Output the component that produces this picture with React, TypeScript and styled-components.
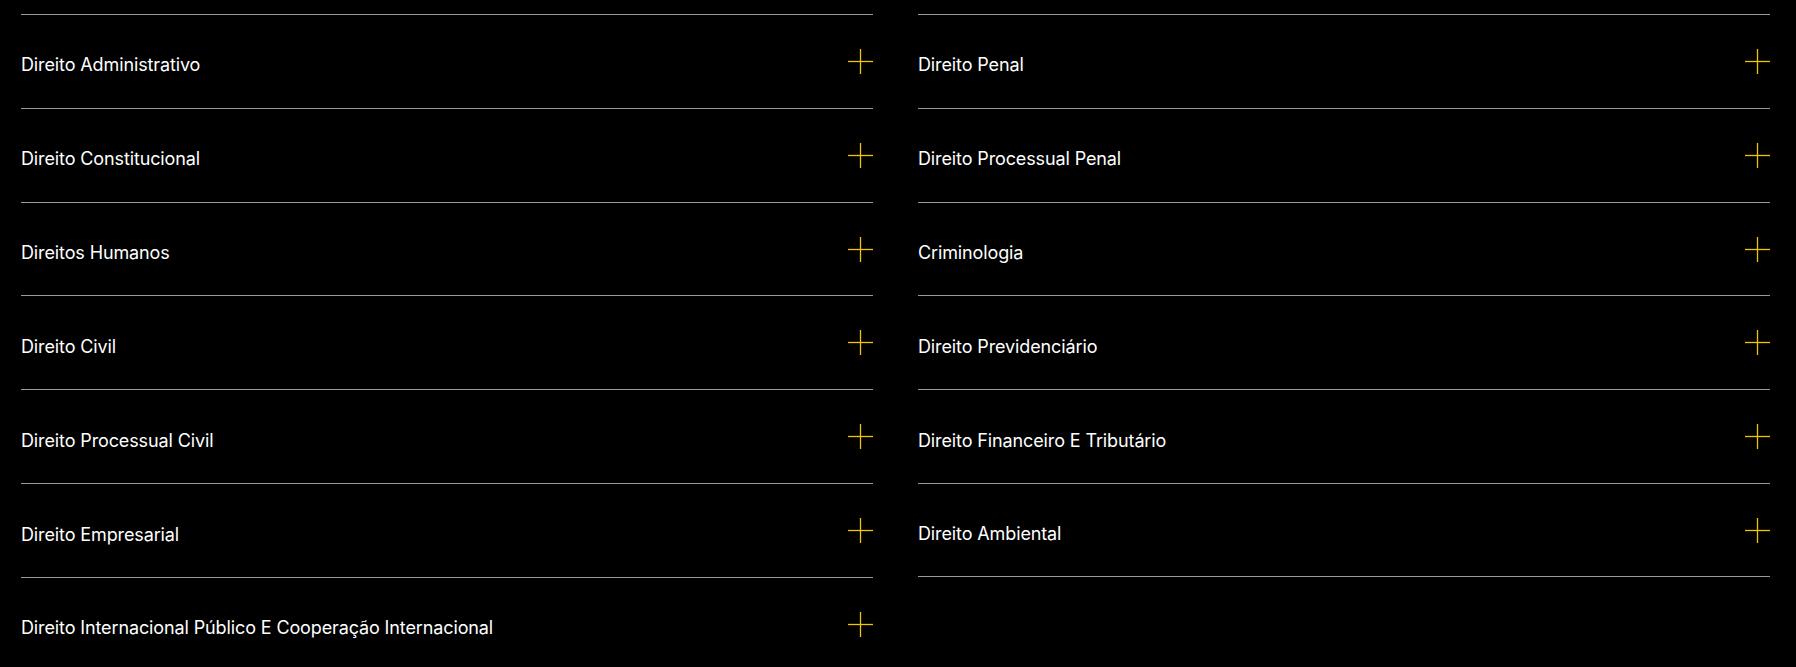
import styled, { createGlobalStyle } from "styled-components";

const GlobalStyle = createGlobalStyle`
  html, body {
    margin: 0;
    padding: 0;
    background: #000;
  }
  body {
    font-family: Inter, "Noto Sans", "Liberation Sans", sans-serif;
  }
`;

const Wrapper = styled.div`
  background: #000;
  min-height: 667px;
  padding: 14px 26px 0 21px;
  box-sizing: border-box;
  display: grid;
  grid-template-columns: 852px 852px;
  column-gap: 45px;
  align-items: start;
`;

const Column = styled.div`
  display: flex;
  flex-direction: column;
`;

const Item = styled.div<{ $last?: boolean }>`
  height: 93.83px;
  box-sizing: border-box;
  border-top: 1px solid #9a9a9a;
  border-bottom: ${(p) => (p.$last ? "1px solid #9a9a9a" : "none")};
  display: flex;
  align-items: center;
  justify-content: space-between;
`;

const Label = styled.span`
  color: #fff;
  font-size: 18px;
  font-weight: 400;
  letter-spacing: -0.12px;
  padding-top: 7px;
`;

const PlusIcon = () => (
  <svg width="25" height="25" viewBox="0 0 25 25">
    <line x1="0" y1="12.5" x2="25" y2="12.5" stroke="#f5c400" strokeWidth="1.3" />
    <line x1="12.5" y1="0" x2="12.5" y2="25" stroke="#f5c400" strokeWidth="1.3" />
  </svg>
);

const left = [
  "Direito Administrativo",
  "Direito Constitucional",
  "Direitos Humanos",
  "Direito Civil",
  "Direito Processual Civil",
  "Direito Empresarial",
  "Direito Internacional Público E Cooperação Internacional",
];

const right = [
  "Direito Penal",
  "Direito Processual Penal",
  "Criminologia",
  "Direito Previdenciário",
  "Direito Financeiro E Tributário",
  "Direito Ambiental",
];

export default function App() {
  return (
    <>
      <GlobalStyle />
      <Wrapper>
        <Column>
          {left.map((t) => (
            <Item key={t}>
              <Label>{t}</Label>
              <PlusIcon />
            </Item>
          ))}
        </Column>
        <Column>
          {right.map((t, i) => (
            <Item key={t} $last={i === right.length - 1}>
              <Label>{t}</Label>
              <PlusIcon />
            </Item>
          ))}
        </Column>
      </Wrapper>
    </>
  );
}
